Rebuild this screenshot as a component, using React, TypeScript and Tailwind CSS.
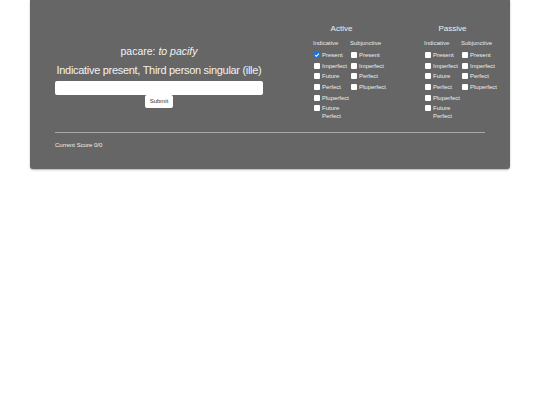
const tenses = {
  indicative: ['Present', 'Imperfect', 'Future', 'Perfect', 'Pluperfect', 'Future Perfect'],
  subjunctive: ['Present', 'Imperfect', 'Perfect', 'Pluperfect'],
};

function Box({ checked }: { checked?: boolean }) {
  return checked ? (
    <span className="mt-[1px] flex h-[6px] w-[6px] shrink-0 items-center justify-center rounded-[1px] bg-[#1a73e8]">
      <svg viewBox="0 0 8 8" className="h-[6px] w-[6px]">
        <path d="M1.5 4.2 3.2 5.8 6.5 2.2" fill="none" stroke="white" strokeWidth="1.4" />
      </svg>
    </span>
  ) : (
    <span className="mt-[1px] h-[6px] w-[6px] shrink-0 rounded-[1px] bg-white" />
  );
}

function Column({ title, items, first }: { title: string; items: string[]; first?: boolean }) {
  return (
    <div className="flex w-[37px] shrink-0 flex-col">
      <div className="mb-[4px] whitespace-nowrap text-[6px] leading-[8px] text-[#e8e8e8]">{title}</div>
      <div className="flex flex-col gap-[2.7px]">
        {items.map((t, i) => (
          <label key={t} className="flex items-start gap-[2px] pl-[1px] text-[6px] leading-[8px] text-[#eeeeee]">
            <Box checked={first && i === 0} />
            <span className="w-[27px]">{t}</span>
          </label>
        ))}
      </div>
    </div>
  );
}

function Group({ title, checkFirst }: { title: string; checkFirst?: boolean }) {
  return (
    <div className="flex w-[111px] shrink-0 flex-col">
      <div className="mb-[5px] w-[57px] text-center text-[8px] leading-[10px] text-[#f0f0f0]">{title}</div>
      <div className="flex">
        <Column title="Indicative" items={tenses.indicative} first={checkFirst} />
        <Column title="Subjunctive" items={tenses.subjunctive} />
      </div>
    </div>
  );
}

export default function App() {
  return (
    <div className="min-h-[405px] w-full bg-white" style={{ fontFamily: '"Liberation Sans", Arial, sans-serif' }}>
      <div className="mx-auto w-[480px] rounded-b-[3px] bg-[#666666] px-[25px] pt-[24px] pb-[20px] shadow-[0_1px_2px_rgba(0,0,0,0.3)]">
        <div className="flex items-start">
          <div className="mt-[20px] flex w-[208px] shrink-0 flex-col items-center">
            <div className="text-[10.5px] leading-[14px] text-[#f2f2f2]">
              pacare: <i>to pacify</i>
            </div>
            <div className="mt-[4px] whitespace-nowrap text-[11px] leading-[16px] tracking-[-0.3px] text-[#f2f2f2]">
              Indicative present, Third person singular (ille)
            </div>
            <input className="mt-[3px] h-[14px] w-full rounded-[2px] bg-white" />
            <button className="h-[13px] rounded-[2px] bg-white px-[5px] text-[6px] text-[#333]">Submit</button>
          </div>
          <div className="ml-[50px] flex">
            <Group title="Active" checkFirst />
            <Group title="Passive" />
          </div>
        </div>
        <div className="mt-[12px] h-px bg-[#a8a8a8]" />
        <div className="mt-[8px] text-[6px] leading-[8px] text-[#eeeeee]">Current Score 0/0</div>
      </div>
    </div>
  );
}
